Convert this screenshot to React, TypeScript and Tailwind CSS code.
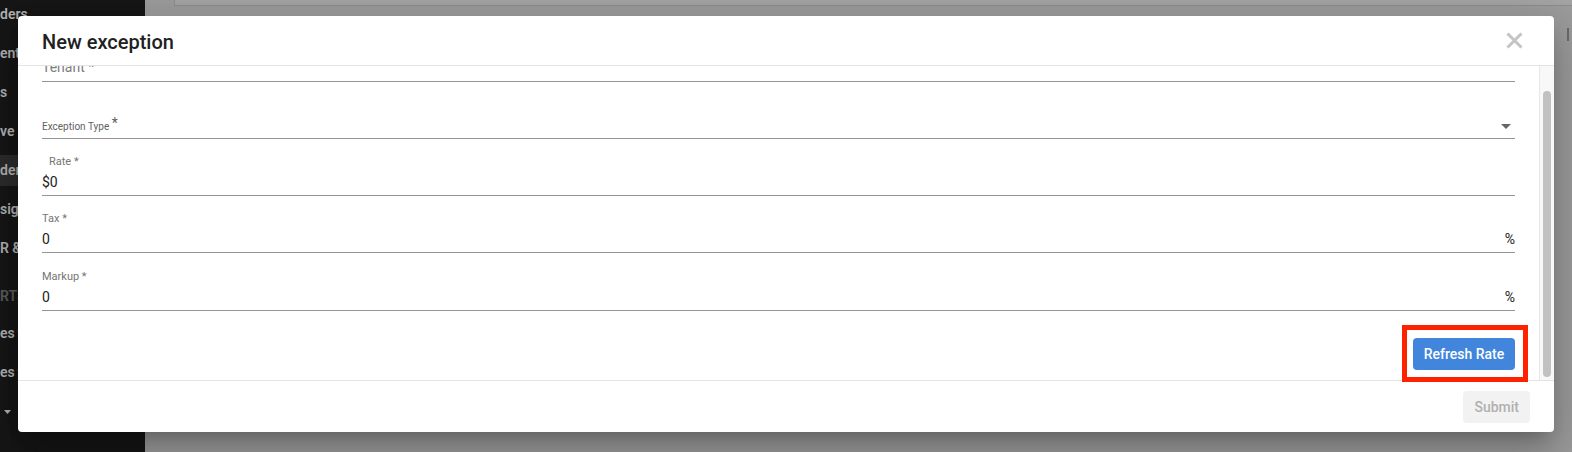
type NavItem = { label: string; active?: boolean }

const topItems: NavItem[] = [
  { label: 'ders' },
  { label: 'ent' },
  { label: 's' },
  { label: 've' },
  { label: 'ders', active: true },
  { label: 'signments' },
  { label: 'R & Reports' },
]

const bottomItems = ['es ▾', 'es ▾']

function Sidebar() {
  return (
    <aside className="w-[145px] shrink-0 overflow-hidden bg-[#161616] font-['Roboto',sans-serif]">
      <div className="mt-[-1px] flex flex-col gap-[8px]">
        {topItems.map((item, i) => (
          <div
            key={i}
            className={`flex h-[31px] items-center whitespace-nowrap text-[14px] font-semibold text-[#b2b2b2] ${
              item.active ? 'bg-[#2c2c2c]' : ''
            }`}
          >
            {item.label}
          </div>
        ))}
      </div>
      <div className="mt-[17px] flex h-[31px] items-center whitespace-nowrap text-[14px] font-semibold text-[#5c5c5c]">
        RTS
      </div>
      <div className="mt-[6px] flex flex-col gap-[8px]">
        {bottomItems.map((label, i) => (
          <div key={i} className="flex h-[31px] items-center whitespace-nowrap text-[14px] font-semibold text-[#b2b2b2]">
            {label}
          </div>
        ))}
        <div className="flex h-[31px] items-center pl-[4px]">
          <svg width="7" height="4" viewBox="0 0 7 4">
            <path d="M0 0h7L3.5 4z" fill="#b2b2b2" />
          </svg>
        </div>
      </div>
    </aside>
  )
}

function Field({
  label,
  value,
  suffix,
  indent,
  className,
}: {
  label: string
  value: string
  suffix?: string
  indent?: boolean
  className: string
}) {
  return (
    <div className={`border-b border-[#949494] pb-[3px] ${className}`}>
      <div className={`text-[11px] leading-[14px] text-[#757575] ${indent ? 'pl-[7px]' : ''}`}>{label}</div>
      <div className="mt-[3px] flex items-center justify-between text-[14px] leading-[20px] text-[#212121]">
        <span>{value}</span>
        {suffix && <span>{suffix}</span>}
      </div>
    </div>
  )
}

function ExceptionModal() {
  return (
    <div className="absolute left-[18px] top-[16px] flex h-[416px] w-[1536px] flex-col overflow-hidden rounded-[4px] bg-white font-['Roboto',sans-serif] shadow-[0_11px_15px_-7px_rgba(0,0,0,0.2),0_24px_38px_3px_rgba(0,0,0,0.14),0_9px_46px_8px_rgba(0,0,0,0.12)]">
      {/* header */}
      <header className="flex h-[50px] shrink-0 items-start justify-between border-b border-[#e3e3e3] pl-[24px] pr-[31px]">
        <h2 className="mt-[12px] text-[20px] font-medium leading-[28px] text-[#212121]">New exception</h2>
        <button className="mt-[16px]">
          <svg width="17" height="17" viewBox="0 0 17 17">
            <path d="M1.5 1.5l14 14M15.5 1.5l-14 14" stroke="#c4c4c4" strokeWidth="3" />
          </svg>
        </button>
      </header>

      {/* body */}
      <div className="flex min-h-0 flex-1">
        <div className="min-w-0 flex-1 overflow-hidden px-[24px]">
          <div className="mt-[-9px] border-b border-[#949494] pb-[4px]">
            <div className="text-[14px] leading-[20px] text-[#7c7c7c]">Tenant *</div>
          </div>

          <div className="mt-[37px] border-b border-[#949494] pb-[5px]">
            <div className="flex h-[14px] items-center justify-between">
              <span className="text-[10px] leading-[14px] text-[#616161]">
                Exception Type <span className="relative top-[-2px] text-[14px]">*</span>
              </span>
              <svg width="10" height="5" viewBox="0 0 10 5" className="mr-[4px]">
                <path d="M0 0h10L5 5z" fill="#666" />
              </svg>
            </div>
          </div>

          <Field className="mt-[16px]" label="Rate *" value="$0" indent />
          <Field className="mt-[16px]" label="Tax *" value="0" suffix="%" />
          <Field className="mt-[17px]" label="Markup *" value="0" suffix="%" />

          <div className="mt-[27px] flex justify-end">
            <button className="h-[32px] w-[102px] rounded-[4px] bg-[#4285dc] text-[14px] font-medium text-white">
              Refresh Rate
            </button>
          </div>
        </div>

        {/* scrollbar */}
        <div className="w-[15px] shrink-0 border-l border-[#e8e8e8] bg-[#f8f8f8] pb-[3px] pl-[3px] pt-[25px]">
          <div className="h-full w-[8px] rounded-full bg-[#c1c1c1]" />
        </div>
      </div>

      {/* footer */}
      <footer className="flex h-[52px] shrink-0 items-start justify-end border-t border-[#e3e3e3] pr-[24px] pt-[10px]">
        <button className="h-[32px] rounded-[4px] bg-[#f2f2f2] px-[11px] text-[14px] font-medium text-[#b0b0b0]">
          Submit
        </button>
      </footer>

      {/* annotation box */}
      <div className="absolute left-[1384px] top-[309px] h-[57px] w-[126px] border-[5px] border-[#ff2200]" />
    </div>
  )
}

export default function App() {
  return (
    <div className="relative flex h-[452px] w-[1572px] overflow-hidden bg-[#9c9c9c]">
      <Sidebar />
      <main className="flex-1">
        <div className="ml-[29px] h-[6px] border-b border-l border-[#8c8c8c] bg-[#a4a4a4]" />
        <div className="mt-[22px] flex justify-end pr-[3px]">
          <div className="h-[13px] w-[2px] bg-[#6a6a6a]" />
        </div>
      </main>
      <ExceptionModal />
    </div>
  )
}
